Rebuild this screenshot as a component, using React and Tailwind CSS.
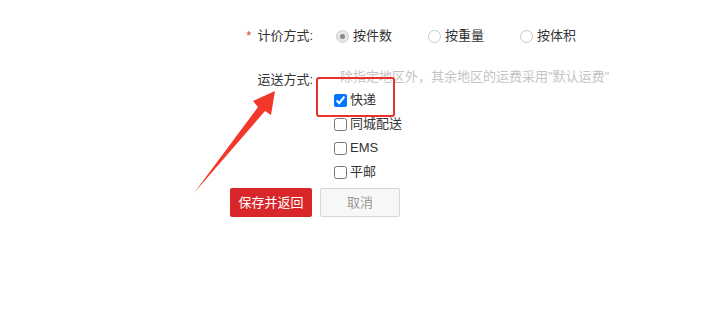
import React from "react"

const font = { fontFamily: '"Liberation Sans", "Noto Sans CJK SC", sans-serif' }

function Radio ({ label, checked }) {
  return (
    <label className="flex items-center gap-[4px]">
      {checked ? (
        <span className="w-[13px] h-[13px] rounded-full bg-[#e6e6e6] border border-[#d0d0d0] flex items-center justify-center">
          <span className="w-[5px] h-[5px] rounded-full bg-[#8a8a8a]" />
        </span>
      ) : (
        <span className="w-[13px] h-[13px] rounded-full bg-white border border-[#c8c8c8]" />
      )}
      <span>{label}</span>
    </label>
  )
}

function Check ({ label, checked }) {
  return (
    <label className="flex items-center h-[24px] gap-[3px]">
      <input type="checkbox" defaultChecked={checked} className="w-[13px] h-[13px] m-0" />
      <span>{label}</span>
    </label>
  )
}

export default function App () {
  return (
    <div className="relative w-[704px] h-[309px] bg-white text-[13px] text-[#333]" style={font}>
      <div className="pl-[230px] pt-[26px]">
        <div className="flex items-center h-[20px]">
          <div className="w-[88px] pr-[5px] text-right leading-[20px]">
            <span className="text-[#e4393c] mr-[6px]">*</span>计价方式:
          </div>
          <div className="ml-[18px] flex items-center gap-[36px]">
            <Radio label="按件数" checked />
            <Radio label="按重量" />
            <Radio label="按体积" />
          </div>
        </div>

        <div className="flex mt-[23px]">
          <div className="w-[88px] pr-[5px] text-right leading-[20px] pt-[1px]">运送方式:</div>
          <div className="ml-[16px]">
            <p className="text-[13px] leading-[16px] text-[#c4c4c4] pl-[6px]">除指定地区外，其余地区的运费采用"默认运费"</p>
            <div className="mt-[3px]">
              <Check label="快递" checked />
              <Check label="同城配送" />
              <Check label="EMS" />
              <Check label="平邮" />
            </div>
          </div>
        </div>

        <div className="flex gap-[8px] mt-[4px]">
          <button className="w-[82px] h-[29px] bg-[#d8262b] text-white text-[13px] rounded-[2px]">保存并返回</button>
          <button className="w-[80px] h-[29px] bg-[#f7f7f7] border border-[#d6d6d6] text-[#999] text-[13px] rounded-[2px]">取消</button>
        </div>
      </div>

      <div className="absolute left-[316px] top-[77px] w-[79px] h-[40px] border-2 border-[#e8332c] rounded-[3px]" />

      <svg className="absolute left-0 top-0 pointer-events-none" width="704" height="309">
        <polygon points="194,193 258,107 253,101 275,91 271,115 265,111" fill="#f2372b" />
      </svg>
    </div>
  )
}
